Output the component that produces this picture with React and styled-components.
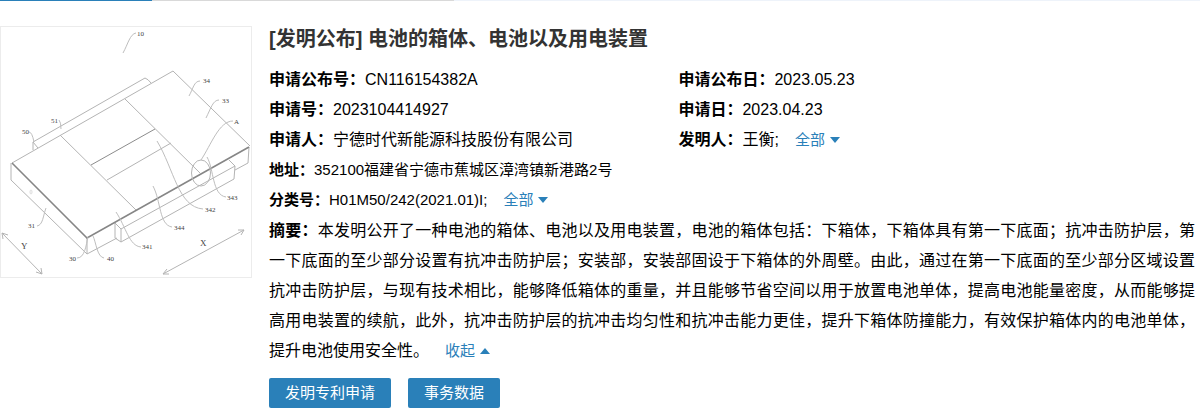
import React, { useState } from 'react';
import styled, { createGlobalStyle } from 'styled-components'

const GlobalStyle = createGlobalStyle`
  * {
    box-sizing: border-box;
  }

  body {
    margin: 0;
    background: #fff;
    color: #000;
    font-family: "Liberation Sans", "Noto Sans CJK SC", sans-serif;
  }
`

const TabLine = styled.div`
  display: flex;
  height: 1px;
  background: #eef3fa;
`

const TabSegment = styled.div`
  width: ${props => props.$width}px;
  background: ${props => props.$active ? '#2a80b9' : '#d9d9d9'};
`

const Patent = styled.article`
  display: flex;
  align-items: flex-start;
  gap: 17px;
  padding: 25px 5px 12px 0;
`

const Figure = styled.figure`
  flex: none;
  width: 252px;
  height: 252px;
  margin: 0;
  border: 1px solid #ececec;
`

const Drawing = styled.svg`
  display: block;
  width: 100%;
  height: 100%;
  fill: none;
  stroke: #b4b4b4;
  stroke-width: 1;
`

const Mark = styled.text`
  fill: #444;
  stroke: none;
  font-family: "Liberation Serif", serif;
  font-size: ${props => props.$large ? 9 : 7}px;
`

const Content = styled.div`
  flex: 1;
  min-width: 0;
`

const Title = styled.h1`
  margin: 0 0 13px;
  color: #333;
  font-size: 20px;
  line-height: 26px;
`

const Fields = styled.dl`
  display: grid;
  grid-template-columns: 44% 1fr;
  column-gap: 2px;
  margin: 0 0 1px;
`

const FieldRow = styled.div`
  display: flex;
  grid-column: ${props => props.$wide ? '1 / -1' : 'auto'};
  font-size: ${props => props.$wide ? 15 : 16}px;
  line-height: 30px;
`

const Label = styled.dt`
  flex: none;
  font-weight: bold;
`

const Value = styled.dd`
  margin: 0;
`

const Abstract = styled.p`
  margin: 0;
  font-size: 16px;
  line-height: 30px;
  text-align: justify;
`

const Toggle = styled.button`
  margin: 0 0 0 16px;
  padding: 0;
  border: 0;
  background: none;
  color: #2a80b9;
  font-family: inherit;
  font-size: 15px;
  line-height: 20px;
  cursor: pointer;

  &::after {
    content: "";
    display: inline-block;
    margin-left: 5px;
    vertical-align: 2px;
    border: 5px solid transparent;
    border-top: ${props => props.$open ? '0' : '6px solid #2a80b9'};
    border-bottom: ${props => props.$open ? '6px solid #2a80b9' : '0'};
  }
`

const Actions = styled.div`
  display: flex;
  gap: 17px;
  margin-top: 12px;
`

const ActionButton = styled.button`
  height: 30px;
  padding: 0 16px;
  border: 0;
  border-radius: 2px;
  background: #2a80b9;
  color: #fff;
  font-family: inherit;
  font-size: 15px;
  line-height: 30px;
  cursor: pointer;
`

const fields = [
  { label: '申请公布号：', value: 'CN116154382A' },
  { label: '申请公布日：', value: '2023.05.23' },
  { label: '申请号：', value: '2023104414927' },
  { label: '申请日：', value: '2023.04.23' },
  { label: '申请人：', value: '宁德时代新能源科技股份有限公司' },
  { label: '发明人：', value: '王衡;', more: true },
  { label: '地址：', value: '352100福建省宁德市蕉城区漳湾镇新港路2号', wide: true },
  { label: '分类号：', value: 'H01M50/242(2021.01)I;', more: true, wide: true }
]

const abstractText = '本发明公开了一种电池的箱体、电池以及用电装置，电池的箱体包括：下箱体，下箱体具有第一下底面；抗冲击防护层，第一下底面的至少部分设置有抗冲击防护层；安装部，安装部固设于下箱体的外周壁。由此，通过在第一下底面的至少部分区域设置抗冲击防护层，与现有技术相比，能够降低箱体的重量，并且能够节省空间以用于放置电池单体，提高电池能量密度，从而能够提高用电装置的续航，此外，抗冲击防护层的抗冲击均匀性和抗冲击能力更佳，提升下箱体防撞能力，有效保护箱体内的电池单体，提升电池使用安全性。'

const marks = [
  ['10', 137, 36], ['34', 203, 83], ['33', 222, 103], ['A', 234, 124],
  ['51', 51, 123], ['50', 22, 134], ['31', 28, 228], ['30', 69, 261],
  ['40', 107, 261], ['341', 142, 249], ['344', 174, 230], ['342', 205, 212],
  ['343', 227, 200]
]

const BoxDrawing = () => (
  <Drawing viewBox="1 27 250 250" role="img" aria-label="电池的箱体">
    {/* top panel and side walls */}
    <path d="M12 163L173 71L250 146M11 163V180L87 254V238M87 254L117 238M249 147L248 163L235 170" />
    {/* cross beams */}
    <path d="M60 135L136 210M125 99L200 173M107 180L171 143" />
    <path d="M91 165L155 129" stroke="#8c8c8c" />
    {/* rear and front rails */}
    <path d="M33 150V142L145 78Q148 79 151 83M33 142L38 148" />
    <path d="M115 223L121 229V242L115 238ZM121 229L235 166M121 242L234 179L235 166L229 160" />
    <path d="M12 163L87 238L249 147" stroke="#868686" strokeWidth="1.6" />
    <ellipse cx="201" cy="173" rx="9.5" ry="13" />
    <ellipse cx="31" cy="192" rx="1" ry="2" stroke="#ddd" />
    {/* leader lines */}
    <path d="M123 53C128 44 130 34 136 33M189 96C193 89 194 81 200 81M206 118C211 108 213 100 219 100M201 160C211 145 219 121 233 121M59 120Q61 122 61 129M29 132Q32 132 34 142M37 226C43 225 43 216 46 208M77 258C85 258 86 245 88 237M104 258C97 257 96 242 93 236M116 212C126 227 129 246 141 247M153 186C161 201 159 225 172 227M157 141C174 169 178 207 203 209M207 157C214 169 212 195 226 197" stroke="#bebebe" />
    {/* direction arrows */}
    <path d="M2 233L42 274M3 239L2 233L8 235M36 272L42 274L41 268M163 274L244 230M167 269L163 274L169 274M238 230L244 230L241 235" />
    {marks.map(([text, x, y]) => (
      <Mark key={text} x={x} y={y}>{text}</Mark>
    ))}
    <Mark x="21" y="249" $large>Y</Mark>
    <Mark x="200" y="246" $large>X</Mark>
  </Drawing>
)

const Field = ({ label, value, more, wide }) => (
  <FieldRow $wide={wide}>
    <Label>{label}</Label>
    <Value>
      {value}
      {more && <Toggle type="button">全部</Toggle>}
    </Value>
  </FieldRow>
)

const App = () => {
  const [open, setOpen] = useState(true);

  return (
    <>
      <GlobalStyle />
      <TabLine>
        <TabSegment $width={152} $active />
        <TabSegment $width={302} />
      </TabLine>
      <Patent>
        <Figure>
          <BoxDrawing />
        </Figure>
        <Content>
          <Title>[发明公布] 电池的箱体、电池以及用电装置</Title>
          <Fields>
            {fields.map(field => <Field key={field.label} {...field} />)}
          </Fields>
          <Abstract>
            <b>摘要：</b>
            {open ? abstractText : abstractText.slice(0, 100) + '...'}
            <Toggle type="button" $open={open} onClick={() => setOpen(!open)}>
              {open ? '收起' : '全部'}
            </Toggle>
          </Abstract>
          <Actions>
            <ActionButton type="button">发明专利申请</ActionButton>
            <ActionButton type="button">事务数据</ActionButton>
          </Actions>
        </Content>
      </Patent>
    </>
  );
}

export default App
